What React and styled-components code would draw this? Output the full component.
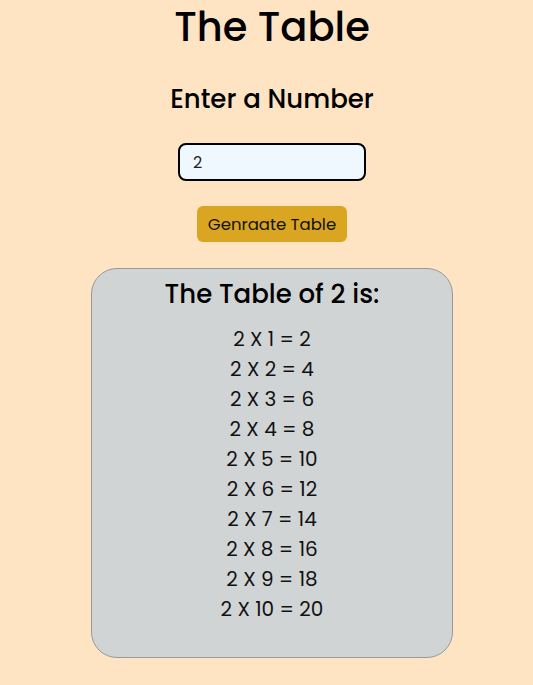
import { useState } from 'react'
import styled, { createGlobalStyle } from 'styled-components'

const GlobalStyle = createGlobalStyle`
  body {
    margin: 0;
    background: bisque;
    font-family: "Poppins", "Inter", "Noto Sans", sans-serif;
    color: #000;
  }
`

const Page = styled.div`
  display: flex;
  flex-direction: column;
  align-items: center;
  padding-left: 11px;
`

const Title = styled.h1`
  font-size: 40px;
  font-weight: 500;
  margin: 2px 0 0;
  line-height: 50px;
`

const Label = styled.h2`
  font-size: 26px;
  font-weight: 500;
  margin: 31px 0 0;
  line-height: 32px;
`

const NumberInput = styled.input`
  margin-top: 28px;
  width: 188px;
  height: 38px;
  box-sizing: border-box;
  border: 2px solid #000;
  border-radius: 8px;
  background: aliceblue;
  padding: 0 13px;
  font-family: inherit;
  font-size: 16px;
  color: #222;
  outline: none;
`

const Button = styled.button`
  margin-top: 25px;
  width: 150px;
  height: 36px;
  border: none;
  border-radius: 6px;
  background: goldenrod;
  font-family: inherit;
  font-size: 16.5px;
  color: #111;
  cursor: pointer;
`

const Card = styled.div`
  margin-top: 26px;
  width: 362px;
  height: 390px;
  box-sizing: border-box;
  border: 1px solid #999;
  border-radius: 26px;
  background: #d0d4d5;
  display: flex;
  flex-direction: column;
  align-items: center;
`

const CardTitle = styled.h3`
  font-size: 26px;
  font-weight: 500;
  margin: 9px 0 14px;
  line-height: 32px;
`

const Row = styled.p`
  margin: 0;
  font-size: 20px;
  line-height: 30px;
  color: #111;
`

const App = () => {
  const [value, setValue] = useState('2')
  const [num, setNum] = useState(2)

  return (
    <Page>
      <GlobalStyle />
      <Title>The Table</Title>
      <Label>Enter a Number</Label>
      <NumberInput
        type="number"
        value={value}
        onChange={(e) => setValue(e.target.value)}
      />
      <Button type="button" onClick={() => setNum(Number(value))}>
        Genraate Table
      </Button>
      <Card>
        <CardTitle>The Table of {num} is:</CardTitle>
        {Array.from({ length: 10 }, (_, i) => (
          <Row key={i}>
            {num} X {i + 1} = {num * (i + 1)}
          </Row>
        ))}
      </Card>
    </Page>
  )
}

export default App
